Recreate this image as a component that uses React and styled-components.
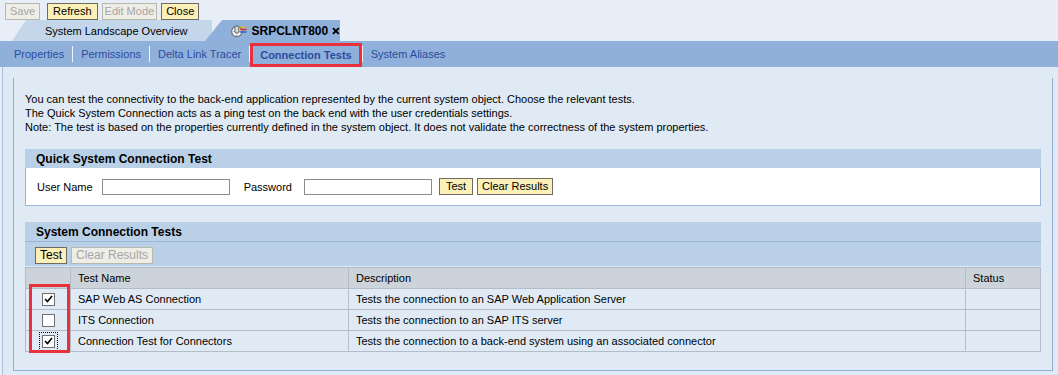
import React from 'react';
import styled, { createGlobalStyle } from 'styled-components';

const GlobalStyle = createGlobalStyle`
  body {
    margin: 0;
    background: #e8eef7;
    font-family: "Liberation Sans", Arial, sans-serif;
    font-size: 11px;
    color: #000;
  }
`;

const Page = styled.div`
  width: 1058px;
  height: 375px;
  overflow: hidden;
  display: flex;
  flex-direction: column;
`;

const Toolbar = styled.div`
  display: flex;
  gap: 4px;
  padding: 3px 0 0 5px;
  height: 17px;
`;

const Button = styled.button`
  height: 17px;
  padding: 0 ${p => (p.$px != null ? p.$px : 4)}px;
  margin-right: ${p => p.$after || 0}px;
  font-family: inherit;
  font-size: ${p => (p.$small ? 11 : 12)}px;
  line-height: 15px;
  border: 1px solid ${p => (p.disabled ? '#b9b8ac' : '#6e6c62')};
  background: ${p => (p.disabled ? '#efeee6' : '#fbf0b7')};
  color: ${p => (p.disabled ? '#a4a4a4' : '#000')};
  cursor: default;
`;

const TabStrip = styled.div`
  display: flex;
  height: 21px;
  padding-left: 12px;
`;

const Tab = styled.div`
  display: flex;
  align-items: center;
  height: 21px;
  font-size: ${p => (p.$active ? '12px' : '11px')};
  background: ${p => (p.$active ? '#8eb0da' : '#c4d7ea')};
  clip-path: polygon(${p => (p.$active ? '17px' : '14px')} 0, 100% 0, 100% 100%, 0 100%);
  margin-left: ${p => (p.$active ? '-7px' : '0')};
  width: ${p => (p.$active ? '135px' : '200px')};
  padding-left: ${p => (p.$active ? '26px' : '33px')};
  box-sizing: border-box;
  font-weight: ${p => (p.$active ? 'bold' : 'normal')};
  gap: 4px;
`;

const NavBar = styled.nav`
  display: flex;
  align-items: center;
  height: 26px;
  background: #8eb0da;
  padding-left: 6px;
`;

const NavLink = styled.a`
  display: flex;
  align-items: center;
  height: ${p => (p.$selected ? '18px' : '24px')};
  padding: 0 ${p => (p.$selected ? 7 : 8)}px;
  border: ${p => (p.$selected ? '3px solid #e8313a' : 'none')};
  color: #2b4c9f;
  font-weight: ${p => (p.$selected ? 'bold' : 'normal')};
  font-size: 11px;
  margin-top: ${p => (p.$selected ? '2px' : '0')};
`;

const NavSep = styled.span`
  width: 1px;
  height: 16px;
  background: #eef3f9;
`;

const Content = styled.div`
  flex: 1;
  background: #dfeaf5;
  margin-left: 2px;
  border-left: 1px solid #a8c0dc;
  padding: 11px 5px 0 10px;
`;

const Box = styled.div`
  border: 1px solid #8fb0d8;
  border-top: none;
  padding: 14px 11px 18px 11px;
`;

const Intro = styled.p`
  margin: 0 0 15px;
  line-height: 14px;
  font-size: 11px;
`;

const Panel = styled.section`
  margin-bottom: ${p => p.$gap || 0}px;
`;

const PanelHeader = styled.div`
  height: 19px;
  display: flex;
  align-items: center;
  padding-left: 11px;
  background: #b9d0e7;
  font-weight: bold;
  font-size: 12px;
  border-bottom: ${p => (p.$line ? '1px solid #9cb8d8' : 'none')};
`;

const PanelBody = styled.div`
  height: 37px;
  background: #fff;
  border: 1px solid #9ab6d8;
  border-top: none;
  display: flex;
  align-items: center;
  padding-left: 11px;
`;

const Label = styled.span`
  font-size: 11px;
  margin-right: ${p => p.$gap}px;
`;

const Input = styled.input`
  width: 128px;
  height: 16px;
  box-sizing: border-box;
  border: 1px solid #8c8c8c;
  margin: 0 ${p => p.$after}px 0 0;
  padding: 0;
`;

const ButtonRow = styled.div`
  display: flex;
  gap: 4px;
`;

const PanelTools = styled.div`
  height: 24px;
  box-sizing: border-box;
  background: #b9d0e7;
  display: flex;
  align-items: flex-end;
  padding: 0 0 2px 10px;
  margin-bottom: 1px;
`;

const TableWrap = styled.div`
  position: relative;
`;

const Table = styled.table`
  width: 100%;
  border-collapse: collapse;
  table-layout: fixed;
  border: 1px solid #b3bdc7;
`;

const Th = styled.th`
  height: 20px;
  padding: 0 0 0 ${p => (p.$check ? 0 : 7)}px;
  text-align: left;
  font-weight: normal;
  font-size: 11px;
  background: #ccd3da;
  border: 1px solid #b3bdc7;
  border-top: none;
  width: ${p => (p.$w ? `${p.$w - (p.$check ? 0 : 7)}px` : 'auto')};
`;

const Td = styled.td`
  height: 20px;
  padding: 0 0 0 ${p => (p.$check ? 0 : 7)}px;
  font-size: 11px;
  background: #dfeaf5;
  border: 1px solid #b3bdc7;
  text-align: ${p => (p.$check ? 'center' : 'left')};
`;

const CheckBox = styled.span`
  display: inline-flex;
  align-items: center;
  justify-content: center;
  width: 13px;
  height: 13px;
  box-sizing: border-box;
  border: 1px solid #707070;
  background: #fff;
  vertical-align: middle;
  outline: ${p => (p.$focus ? '1px dotted #000' : 'none')};
  outline-offset: 2px;
`;

const Highlight = styled.div`
  position: absolute;
  left: 4px;
  top: 17px;
  width: 41px;
  height: 69px;
  box-sizing: border-box;
  border: 3px solid #e8313a;
  pointer-events: none;
`;

const Check = () => (
  <svg width="9" height="8" viewBox="0 0 9 8">
    <path d="M1 4 L3.5 6.5 L8 1" fill="none" stroke="#000" strokeWidth="1.6" />
  </svg>
);

const SystemIcon = () => (
  <svg width="17" height="15" viewBox="0 0 17 15">
    <circle cx="6" cy="8.5" r="5.3" fill="#fff" stroke="#6b7078" strokeWidth="1.2" />
    <path d="M2 8.5 H10 M6 3.5 V13.5" stroke="#9aa0a8" strokeWidth="0.8" />
    <rect x="4" y="3" width="4" height="7" rx="1" fill="#d7d9dc" stroke="#555" strokeWidth="0.9" />
    <path d="M9 4 H16" stroke="#e3b81d" strokeWidth="1.4" />
    <path d="M9 6.5 H16" stroke="#d9362b" strokeWidth="1.4" />
    <path d="M9 9 H16" stroke="#2f63c8" strokeWidth="1.4" />
  </svg>
);

const CloseX = () => (
  <svg width="8" height="8" viewBox="0 0 8 8">
    <path d="M1 1 L7 7 M7 1 L1 7" stroke="#000" strokeWidth="2" />
  </svg>
);

const tests = [
  { name: 'SAP Web AS Connection', desc: 'Tests the connection to an SAP Web Application Server', checked: true },
  { name: 'ITS Connection', desc: 'Tests the connection to an SAP ITS server', checked: false },
  { name: 'Connection Test for Connectors', desc: 'Tests the connection to a back-end system using an associated connector', checked: true, focus: true },
];

const navItems = ['Properties', 'Permissions', 'Delta Link Tracer', 'Connection Tests', 'System Aliases'];

export default function App() {
  return (
    <Page>
      <GlobalStyle />
      <Toolbar>
        <Button $small disabled $after={3}>Save</Button>
        <Button $small $px={5}>Refresh</Button>
        <Button $small $px={2} disabled>Edit Mode</Button>
        <Button $small>Close</Button>
      </Toolbar>
      <TabStrip>
        <Tab>System Landscape Overview</Tab>
        <Tab $active>
          <SystemIcon />
          SRPCLNT800
          <CloseX />
        </Tab>
      </TabStrip>
      <NavBar>
        {navItems.map((item, i) => (
          <React.Fragment key={item}>
            {i > 0 && <NavSep />}
            <NavLink $selected={item === 'Connection Tests'}>{item}</NavLink>
          </React.Fragment>
        ))}
      </NavBar>
      <Content>
        <Box>
          <Intro>
            You can test the connectivity to the back-end application represented by the current system object. Choose the relevant tests.
            <br />
            The Quick System Connection acts as a ping test on the back end with the user credentials settings.
            <br />
            Note: The test is based on the properties currently defined in the system object. It does not validate the correctness of the system properties.
          </Intro>
          <Panel $gap={16}>
            <PanelHeader>Quick System Connection Test</PanelHeader>
            <PanelBody>
              <Label $gap={9}>User Name</Label>
              <Input $after={14} />
              <Label $gap={12}>Password</Label>
              <Input $after={7} />
              <ButtonRow>
                <Button $small $px={6}>Test</Button>
                <Button $small>Clear Results</Button>
              </ButtonRow>
            </PanelBody>
          </Panel>
          <Panel>
            <PanelHeader $line>System Connection Tests</PanelHeader>
            <PanelTools>
              <ButtonRow>
                <Button>Test</Button>
                <Button disabled>Clear Results</Button>
              </ButtonRow>
            </PanelTools>
            <TableWrap>
              <Table>
                <thead>
                  <tr>
                    <Th $check $w={44} />
                    <Th $w={277}>Test Name</Th>
                    <Th>Description</Th>
                    <Th $w={74}>Status</Th>
                  </tr>
                </thead>
                <tbody>
                  {tests.map(t => (
                    <tr key={t.name}>
                      <Td $check>
                        <CheckBox $focus={t.focus}>{t.checked && <Check />}</CheckBox>
                      </Td>
                      <Td>{t.name}</Td>
                      <Td>{t.desc}</Td>
                      <Td />
                    </tr>
                  ))}
                </tbody>
              </Table>
              <Highlight />
            </TableWrap>
          </Panel>
        </Box>
      </Content>
    </Page>
  );
}
